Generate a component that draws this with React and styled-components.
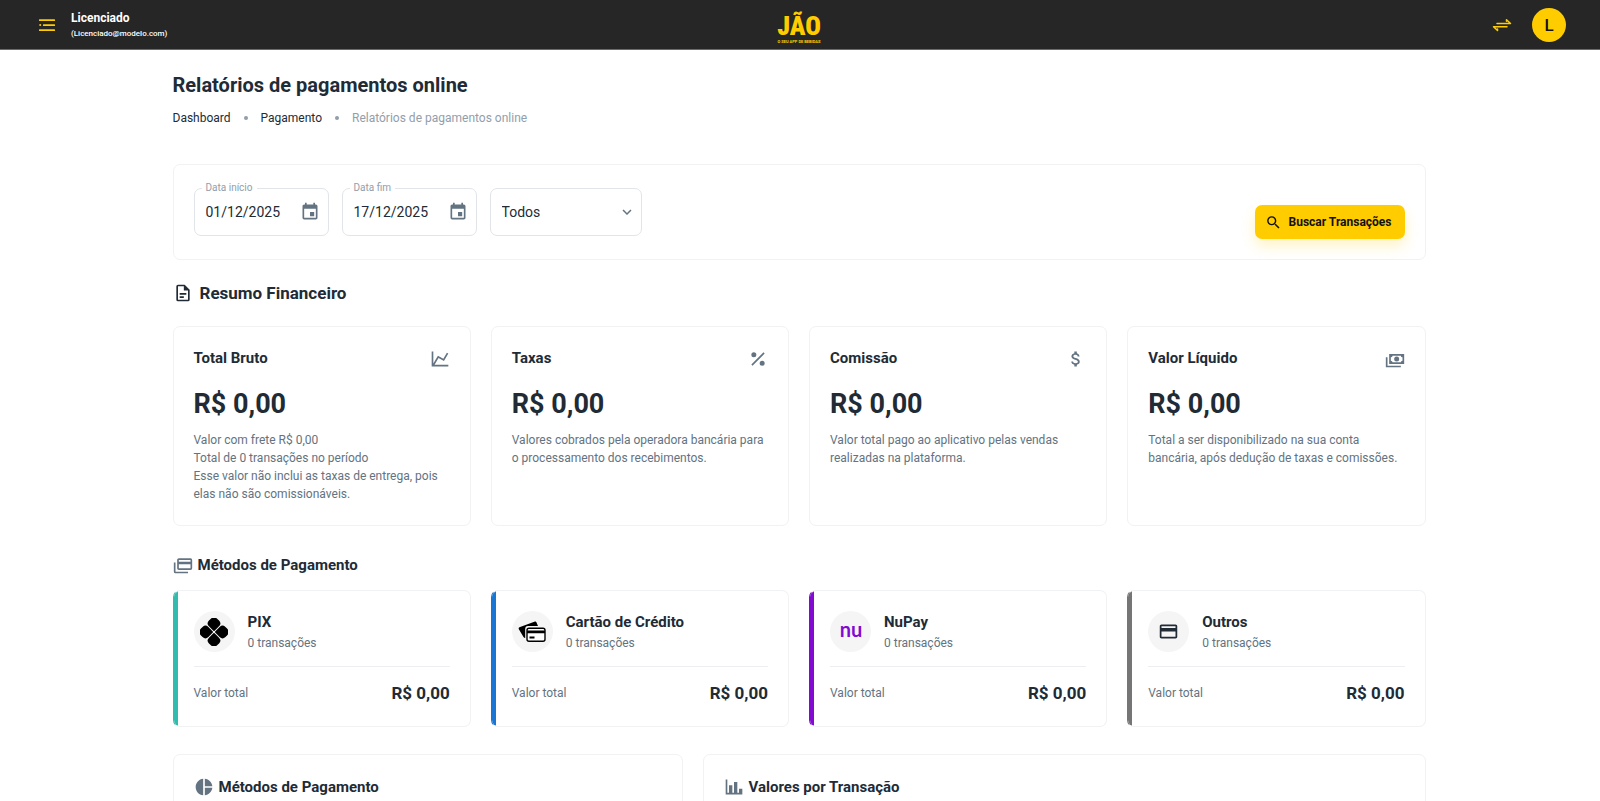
import React, { useState } from 'react'
import styled, { createGlobalStyle } from 'styled-components'
import { MdEvent, MdSearch, MdKeyboardArrowDown, MdAttachMoney, MdCreditCard } from 'react-icons/md'

const GlobalStyle = createGlobalStyle`
  * {
    box-sizing: border-box;
  }
  html {
    scrollbar-width: none;
  }
  body {
    margin: 0;
    background: #fff;
    color: #212b36;
    font-family: Roboto, "Liberation Sans", sans-serif;
    font-size: 12px;
    line-height: 18px;
  }
  h1, h2, h3, p {
    margin: 0;
  }
  svg {
    display: block;
    flex-shrink: 0;
  }
`

const Header = styled.header`
  display: grid;
  grid-template-columns: 1fr auto 1fr;
  align-items: center;
  height: 50px;
  padding: 0 34px;
  background: #262626;
  border-bottom: 1px solid #6b6b6b;
  color: #fff;
`
const HeaderLeft = styled.div`
  display: flex;
  align-items: center;
  gap: 11px;
`
const HeaderRight = styled.div`
  display: flex;
  align-items: center;
  justify-content: flex-end;
  gap: 17px;
`
const IconButton = styled.button`
  display: flex;
  padding: 0;
  border: 0;
  background: none;
  color: #637381;
  cursor: pointer;
`
const HeaderButton = styled(IconButton)`
  padding: 0 3px;
  color: #ffcc00;
`
const UserName = styled.p`
  font-weight: 700;
`
const UserEmail = styled.p`
  font-size: 8px;
  font-weight: 500;
  line-height: 14px;
`
const Avatar = styled.button`
  width: 34px;
  height: 34px;
  padding: 0;
  border: 0;
  border-radius: 50%;
  background: #ffcc00;
  color: #111;
  font-family: inherit;
  font-size: 17px;
  font-weight: 500;
  cursor: pointer;
`

const Content = styled.main`
  max-width: 1255px;
  margin: 0 auto;
  padding: 21px 2px 40px 0;
`
const PageTitle = styled.h1`
  font-size: 20px;
  font-weight: 700;
  line-height: 28px;
`
const Breadcrumbs = styled.ol`
  display: flex;
  align-items: center;
  margin: 10px 0 37px;
  padding: 0;
  list-style: none;
`
const Crumb = styled.li`
  display: flex;
  align-items: center;
  color: #919eab;

  & + &::before {
    content: '';
    width: 4px;
    height: 4px;
    margin: 0 13px;
    border-radius: 50%;
    background: #919eab;
  }
  a {
    color: #212b36;
    text-decoration: none;
  }
`

const Card = styled.section`
  padding: 20px;
  border: 1px solid #f0f2f4;
  border-radius: 7px;
  background: #fff;
`
const FilterBar = styled(Card)`
  display: flex;
  justify-content: space-between;
  min-height: 96px;
`
const Fields = styled.div`
  display: flex;
  gap: 13px;
  padding-top: 3px;
`
const Field = styled.div`
  position: relative;
  display: flex;
  align-items: center;
  width: ${({ $wide }) => ($wide ? 152 : 135)}px;
  height: 48px;
  padding: 0 8px 0 11px;
  border: 1px solid #e1e5e9;
  border-radius: 7px;
`
const FieldLabel = styled.label`
  position: absolute;
  top: -8px;
  left: 7px;
  padding: 0 4px;
  background: #fff;
  color: #919eab;
  font-size: 10px;
  line-height: 14px;
`
const DateInput = styled.input`
  flex: 1;
  min-width: 0;
  padding: 0;
  border: 0;
  outline: 0;
  background: none;
  color: #212b36;
  font-family: inherit;
  font-size: 14px;
`
const StatusSelect = styled.select`
  position: absolute;
  inset: 0;
  width: 100%;
  padding: 0 11px;
  border: 0;
  outline: 0;
  appearance: none;
  background: none;
  color: #212b36;
  font-family: inherit;
  font-size: 14px;
`
const SelectArrow = styled.span`
  margin-left: auto;
  margin-right: -3px;
  color: #637381;
`
const SearchButton = styled.button`
  display: flex;
  align-items: center;
  align-self: flex-end;
  gap: 7px;
  height: 34px;
  padding: 0 13px 0 10px;
  border: 0;
  border-radius: 7px;
  background: #ffcc00;
  box-shadow: 0 7px 14px rgba(255, 204, 0, 0.24);
  color: #111;
  font-family: inherit;
  font-size: 12px;
  font-weight: 700;
  cursor: pointer;
`

const SectionTitle = styled.h2`
  display: flex;
  align-items: center;
  gap: ${({ $large }) => ($large ? 7 : 5)}px;
  margin-top: ${({ $top }) => $top || 0}px;
  font-size: ${({ $large }) => ($large ? 17 : 15)}px;
  font-weight: 700;
  line-height: 24px;

  svg {
    color: ${({ $large }) => ($large ? '#212b36' : '#637381')};
  }
`
const CardGrid = styled.div`
  display: grid;
  grid-template-columns: repeat(4, 1fr);
  gap: 20px;
  margin-top: ${({ $top }) => $top}px;
`
const SummaryCard = styled(Card)`
  min-height: 200px;
`
const CardHead = styled.div`
  display: flex;
  align-items: center;
  justify-content: space-between;
  color: #637381;
`
const CardTitle = styled.h3`
  color: #212b36;
  font-size: 15px;
  font-weight: 700;
  line-height: 23px;
`
const Amount = styled.p`
  margin: 14px 0 7px;
  font-size: 27px;
  font-weight: 700;
  line-height: 40px;
`
const Muted = styled.p`
  color: #637381;
`

const MethodCard = styled(Card)`
  position: relative;
  overflow: hidden;
  min-height: 137px;
  border-left-color: ${({ $accent }) => $accent};

  &::before {
    content: '';
    position: absolute;
    inset: 0 auto 0 0;
    width: 4px;
    background: ${({ $accent }) => $accent};
  }
`
const MethodHead = styled.div`
  display: flex;
  align-items: center;
  gap: 13px;
  padding-bottom: 14px;
  border-bottom: 1px solid #eceef1;
`
const MethodIcon = styled.span`
  display: flex;
  align-items: center;
  justify-content: center;
  width: 41px;
  height: 41px;
  border-radius: 50%;
  background: #f5f5f5;
`
const MethodTotal = styled.div`
  display: flex;
  align-items: center;
  justify-content: space-between;
  padding-top: 13px;
  color: #637381;
`
const MethodValue = styled.strong`
  color: #212b36;
  font-size: 17px;
  line-height: 26px;
`
const ChartGrid = styled.div`
  display: grid;
  grid-template-columns: 510fr 723fr;
  gap: 20px;
  margin-top: 27px;
`
const ChartCard = styled(Card)`
  min-height: 320px;
`

const icons = {
  file: 'M6,2A2,2 0 0,0 4,4V20A2,2 0 0,0 6,22H18A2,2 0 0,0 20,20V8L14,2H6M6,4H13V9H18V20H6V4M8,12V14H16V12H8M8,16V18H13V16H8Z',
  line: 'M16,11.78L20.24,4.45L21.97,5.45L16.74,14.5L10.23,10.75L5.46,19H22V21H2V3H4V17.54L9.5,8L16,11.78Z',
  percent: 'M7,4A3,3 0 0,1 10,7A3,3 0 0,1 7,10A3,3 0 0,1 4,7A3,3 0 0,1 7,4M17,14A3,3 0 0,1 20,17A3,3 0 0,1 17,20A3,3 0 0,1 14,17A3,3 0 0,1 17,14M20,5.41L5.41,20L4,18.59L18.59,4L20,5.41Z',
  cash: 'M5,6H23V18H5V6M14,9A3,3 0 0,1 17,12A3,3 0 0,1 14,15A3,3 0 0,1 11,12A3,3 0 0,1 14,9M9,8A2,2 0 0,1 7,10V14A2,2 0 0,1 9,16H19A2,2 0 0,1 21,14V10A2,2 0 0,1 19,8H9M1,10H3V20H19V22H1V10Z',
  cards: 'M21,8V6H7V8H21M21,16V11H7V16H21M21,4A2,2 0 0,1 23,6V16A2,2 0 0,1 21,18H7C5.89,18 5,17.1 5,16V6C5,4.89 5.89,4 7,4H21M3,20H18V22H3A2,2 0 0,1 1,20V9H3V20Z',
  pie: 'M11,2V22C5.9,21.5 2,17.2 2,12C2,6.8 5.9,2.5 11,2M13,2V11H22C21.5,6.2 17.8,2.5 13,2M13,13V22C17.7,21.5 21.5,17.8 22,13H13Z',
  bars: 'M22,21H2V3H4V19H6V10H10V19H12V6H16V19H18V14H22V21Z',
}

const Icon = ({ name, size = 20 }) => (
  <svg width={size} height={size} viewBox="0 0 24 24" fill="currentColor" fillRule="evenodd" aria-hidden="true">
    <path d={icons[name]} />
  </svg>
)

const MenuIcon = () => (
  <svg width="20" height="20" viewBox="0 0 20 20" fill="currentColor" aria-hidden="true">
    <circle cx="3.2" cy="10" r="1" />
    <rect x="6" y="9.200" width="12" height="1.700" rx="0.5" />
    <rect x="2" y="4.200" width="16" height="1.700" rx="0.5" />
    <rect x="2" y="14.200" width="16" height="1.700" rx="0.5" />
  </svg>
)

const SwapIcon = () => (
  <svg width="20" height="20" viewBox="0 0 20 20" fill="none" stroke="currentColor" strokeWidth="1.500" strokeLinecap="round" strokeLinejoin="round" aria-hidden="true">
    <path d="M5 8.500h13.500l-4-3.800v1.500M15 11.700H1.500l4 3.800V14" />
  </svg>
)

const Logo = () => (
  <svg width="46" height="46" viewBox="0 0 46 46" fill="#ffcc00" role="img" aria-label="JÃO">
    <text x="22" y="33" textAnchor="middle" fontFamily="'Roboto Condensed', 'Liberation Sans Narrow', Roboto, sans-serif" fontSize="26" fontWeight="900">JÃO</text>
    <text x="22" y="41" textAnchor="middle" fontFamily="Roboto, sans-serif" fontSize="4" fontWeight="700">O SEU APP DE BEBIDAS</text>
  </svg>
)

const petal = 'M3.200 8Q3.200 3.200 8 3.200H9.800Q13.600 3.200 13.600 7V12.800Q13.600 13.600 12.800 13.600H7Q3.200 13.600 3.200 9.800Z'

const PixIcon = () => (
  <svg width="28" height="28" viewBox="1 1 26 26" aria-hidden="true">
    {[45, 135, 225, 315].map((angle) => (
      <path key={angle} d={petal} transform={`rotate(${angle} 14 14)`} />
    ))}
  </svg>
)

const CreditIcon = () => (
  <svg width="28" height="22" viewBox="0 0 28 22" aria-hidden="true">
    <path d="M1.400 6.200 17 .6q1-.3 1.400.6L20 5H10Q7.200 5 7.200 8V17Q6 17 5.500 16L.700 8q-.4-1.300.7-1.800z" />
    <rect x="9" y="7.200" width="18" height="13" rx="2" fill="#fff" stroke="#000" strokeWidth="1.400" />
    <path d="M9 9.500h18v2.700H9zM11.500 15.400h5v2h-5z" />
  </svg>
)

const NuIcon = () => (
  <svg width="32" height="30" viewBox="0 0 32 30" fill="#820ad1" role="img" aria-label="Nu">
    <text x="16" y="20" textAnchor="middle" fontFamily="Lato, sans-serif" fontSize="20" fontWeight="700">nu</text>
  </svg>
)

const summary = [
  {
    title: 'Total Bruto',
    icon: <Icon name="line" />,
    lines: [
      'Valor com frete R$ 0,00',
      'Total de 0 transações no período',
      'Esse valor não inclui as taxas de entrega, pois elas não são comissionáveis.',
    ],
  },
  {
    title: 'Taxas',
    icon: <Icon name="percent" />,
    lines: ['Valores cobrados pela operadora bancária para o processamento dos recebimentos.'],
  },
  {
    title: 'Comissão',
    icon: <MdAttachMoney size={20} />,
    lines: ['Valor total pago ao aplicativo pelas vendas realizadas na plataforma.'],
  },
  {
    title: 'Valor Líquido',
    icon: <Icon name="cash" />,
    lines: ['Total a ser disponibilizado na sua conta bancária, após dedução de taxas e comissões.'],
  },
]

const methods = [
  { title: 'PIX', accent: '#32bcad', icon: <PixIcon /> },
  { title: 'Cartão de Crédito', accent: '#1976d2', icon: <CreditIcon /> },
  { title: 'NuPay', accent: '#820ad1', icon: <NuIcon /> },
  { title: 'Outros', accent: '#757575', icon: <MdCreditCard size={21} /> },
]

const App = () => {
  const [start, setStart] = useState('01/12/2025')
  const [end, setEnd] = useState('17/12/2025')

  return (
    <>
      <GlobalStyle />
      <Header>
        <HeaderLeft>
          <HeaderButton aria-label="Menu"><MenuIcon /></HeaderButton>
          <div>
            <UserName>Licenciado</UserName>
            <UserEmail>(Licenciado@modelo.com)</UserEmail>
          </div>
        </HeaderLeft>
        <Logo />
        <HeaderRight>
          <HeaderButton aria-label="Trocar"><SwapIcon /></HeaderButton>
          <Avatar>L</Avatar>
        </HeaderRight>
      </Header>
      <Content>
        <PageTitle>Relatórios de pagamentos online</PageTitle>
        <nav>
          <Breadcrumbs>
            <Crumb><a href="#dashboard">Dashboard</a></Crumb>
            <Crumb><a href="#pagamento">Pagamento</a></Crumb>
            <Crumb>Relatórios de pagamentos online</Crumb>
          </Breadcrumbs>
        </nav>

        <FilterBar>
          <Fields>
            <Field>
              <FieldLabel htmlFor="start">Data início</FieldLabel>
              <DateInput id="start" value={start} onChange={(e) => setStart(e.target.value)} />
              <IconButton aria-label="Escolher data início"><MdEvent size={20} /></IconButton>
            </Field>
            <Field>
              <FieldLabel htmlFor="end">Data fim</FieldLabel>
              <DateInput id="end" value={end} onChange={(e) => setEnd(e.target.value)} />
              <IconButton aria-label="Escolher data fim"><MdEvent size={20} /></IconButton>
            </Field>
            <Field $wide>
              <StatusSelect aria-label="Status" defaultValue="todos">
                <option value="todos">Todos</option>
              </StatusSelect>
              <SelectArrow><MdKeyboardArrowDown size={18} /></SelectArrow>
            </Field>
          </Fields>
          <SearchButton><MdSearch size={17} />Buscar Transações</SearchButton>
        </FilterBar>

        <SectionTitle $large $top={21}><Icon name="file" />Resumo Financeiro</SectionTitle>
        <CardGrid $top={21}>
          {summary.map((item) => (
            <SummaryCard key={item.title}>
              <CardHead>
                <CardTitle>{item.title}</CardTitle>
                {item.icon}
              </CardHead>
              <Amount>R$ 0,00</Amount>
              {item.lines.map((line) => <Muted key={line}>{line}</Muted>)}
            </SummaryCard>
          ))}
        </CardGrid>

        <SectionTitle $top={27}><Icon name="cards" />Métodos de Pagamento</SectionTitle>
        <CardGrid $top={13}>
          {methods.map((item) => (
            <MethodCard key={item.title} $accent={item.accent}>
              <MethodHead>
                <MethodIcon>{item.icon}</MethodIcon>
                <div>
                  <CardTitle>{item.title}</CardTitle>
                  <Muted>0 transações</Muted>
                </div>
              </MethodHead>
              <MethodTotal>
                <span>Valor total</span>
                <MethodValue>R$ 0,00</MethodValue>
              </MethodTotal>
            </MethodCard>
          ))}
        </CardGrid>

        <ChartGrid>
          <ChartCard>
            <SectionTitle><Icon name="pie" />Métodos de Pagamento</SectionTitle>
          </ChartCard>
          <ChartCard>
            <SectionTitle><Icon name="bars" />Valores por Transação</SectionTitle>
          </ChartCard>
        </ChartGrid>
      </Content>
    </>
  )
}

export default App
